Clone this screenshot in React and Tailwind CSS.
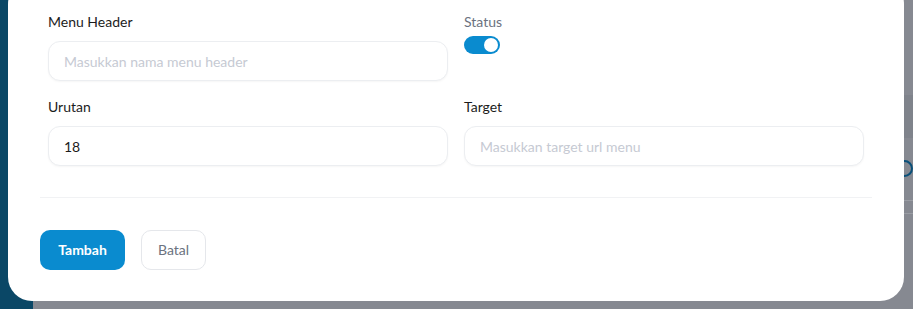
import React from "react";

const Field = ({ label, placeholder, value }) => (
  <div className="flex flex-col">
    <label className="mb-[9px] text-sm leading-5 text-[#1c1c1c]">{label}</label>
    <input
      className="h-10 w-full rounded-xl border border-[#eceef1] bg-white px-[15px] text-sm text-[#1c1c1c] shadow-[0_1px_2px_rgba(0,0,0,0.04)] outline-none placeholder:text-[#c6cad3]"
      placeholder={placeholder}
      defaultValue={value}
    />
  </div>
);

export default function App() {
  return (
    <div className="relative h-[309px] w-[913px] overflow-hidden bg-[#868991] font-['Lato',sans-serif]">
      {/* dimmed page behind the dialog */}
      <div className="absolute left-0 top-0 h-full w-[33px] bg-[#0a4766]" />
      <div className="absolute right-0 top-[95px] h-[43px] w-[12px] bg-[#7f838b]" />
      <div className="absolute right-0 top-[200px] h-px w-[12px] bg-[#9a9da4]" />
      <div className="absolute right-0 top-[213px] h-px w-[12px] bg-[#9a9da4]" />
      <div className="absolute left-[896px] top-[160px] h-[17px] w-[17px] rounded-full border-2 border-[#0a4f78]" />

      <div className="absolute left-[8px] top-[-20px] h-[321px] w-[896px] rounded-3xl bg-white px-8 pt-8">
        <div className="grid grid-cols-2 gap-x-4 gap-y-4 px-2">
          <Field label="Menu Header" placeholder="Masukkan nama menu header" />
          <div className="flex flex-col">
            <span className="text-sm leading-5 text-[#6b7280]">Status</span>
            <button className="mt-1 flex h-[18px] w-9 items-center justify-end rounded-full bg-[#0a8bcf] p-[2px]">
              <span className="h-[14px] w-[14px] rounded-full bg-white" />
            </button>
          </div>
          <Field label="Urutan" value="18" />
          <Field label="Target" placeholder="Masukkan target url menu" />
        </div>

        <div className="mt-[31px] h-px bg-[#f1f2f4]" />

        <div className="mt-[32px] flex gap-4">
          <button className="h-10 w-[85px] rounded-[10px] bg-[#0a8bcf] text-sm font-bold text-white">
            Tambah
          </button>
          <button className="h-10 w-[65px] rounded-[10px] border border-[#e5e7eb] bg-white text-sm text-[#6b7280]">
            Batal
          </button>
        </div>
      </div>
    </div>
  );
}
